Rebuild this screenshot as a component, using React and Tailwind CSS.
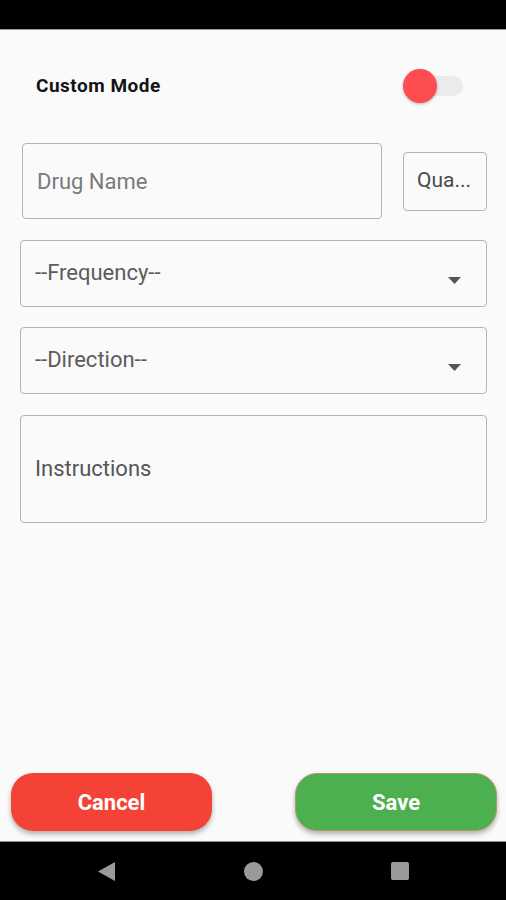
import React from 'react';

const font = { fontFamily: 'Roboto, "Noto Sans", sans-serif' };

const Caret = () => (
  <svg width="13" height="7" viewBox="0 0 13 7" className="mt-[14px] shrink-0">
    <path d="M0 0 L13 0 L6.5 7 Z" fill="#555555" />
  </svg>
);

const Select = ({ label, className }) => (
  <div
    className={`flex items-center justify-between h-[67px] border border-[#b4b4b4] rounded-[4px] pl-[14px] pr-[25px] ${className}`}
  >
    <span className="text-[22px] text-[#5c5c5c] -mt-[3px]">{label}</span>
    <Caret />
  </div>
);

export default function App() {
  return (
    <div className="w-full h-[900px] flex flex-col bg-[#fafafa]" style={font}>
      {/* status bar */}
      <div className="h-[30px] bg-black border-b border-[#9a9a9a] shrink-0"></div>

      <div className="flex-1 flex flex-col">
        {/* custom mode row */}
        <div className="mt-[39px] h-[34px] flex items-center justify-between pl-[36px] pr-[43px]">
          <span className="text-[19px] tracking-[0.5px] font-bold text-[#141414]">Custom Mode</span>
          <div className="relative w-[60px] h-[34px]">
            <div className="absolute left-[2px] right-0 top-[7px] h-[20px] rounded-full bg-[#ebebeb]"></div>
            <div className="absolute left-0 top-0 w-[34px] h-[34px] rounded-full bg-[#fe4d50] shadow-[0_1px_3px_rgba(0,0,0,0.3)]"></div>
          </div>
        </div>

        {/* drug name + quantity */}
        <div className="mt-[40px] flex items-center gap-[21px] pl-[22px] pr-[19px]">
          <div className="w-[360px] h-[76px] border border-[#b4b4b4] rounded-[4px] flex items-center pl-[14px]">
            <span className="text-[22px] text-[#7a7a7a]">Drug Name</span>
          </div>
          <div className="flex-1 h-[59px] border border-[#b4b4b4] rounded-[4px] flex items-center pl-[13px]">
            <span className="text-[21px] text-[#4a4a4a]">Qua...</span>
          </div>
        </div>

        <div className="pl-[20px] pr-[19px] flex flex-col">
          <Select label="--Frequency--" className="mt-[21px]" />
          <Select label="--Direction--" className="mt-[20px] h-[66px]" />
          <div className="mt-[21px] h-[108px] border border-[#b4b4b4] rounded-[4px] flex items-center pl-[14px]">
            <span className="text-[22px] text-[#555555] -mt-[2px]">Instructions</span>
          </div>
        </div>

        <div className="flex-1"></div>

        {/* buttons */}
        <div className="flex justify-between pl-[11px] pr-[9px] mb-[10px]">
          <button className="w-[201px] h-[58px] rounded-[22px] bg-[#f44336] text-white text-[22px] font-bold shadow-[0_3px_5px_rgba(0,0,0,0.3)]">
            Cancel
          </button>
          <button className="w-[202px] h-[58px] rounded-[22px] bg-[#4caf50] text-white text-[22px] font-bold border border-[#b9956a] shadow-[0_3px_5px_rgba(0,0,0,0.3)]">
            Save
          </button>
        </div>
      </div>

      {/* nav bar */}
      <div className="h-[59px] bg-black border-t border-[#8c8c8c] shrink-0 flex items-center justify-center gap-[128px]">
        <svg width="18" height="19" viewBox="0 0 18 19">
          <path d="M17 0 L17 19 L0 9.5 Z" fill="#9a9a9a" />
        </svg>
        <div className="w-[19px] h-[19px] rounded-full bg-[#9a9a9a]"></div>
        <div className="w-[18px] h-[18px] rounded-[2px] bg-[#9a9a9a]"></div>
      </div>
    </div>
  );
}
